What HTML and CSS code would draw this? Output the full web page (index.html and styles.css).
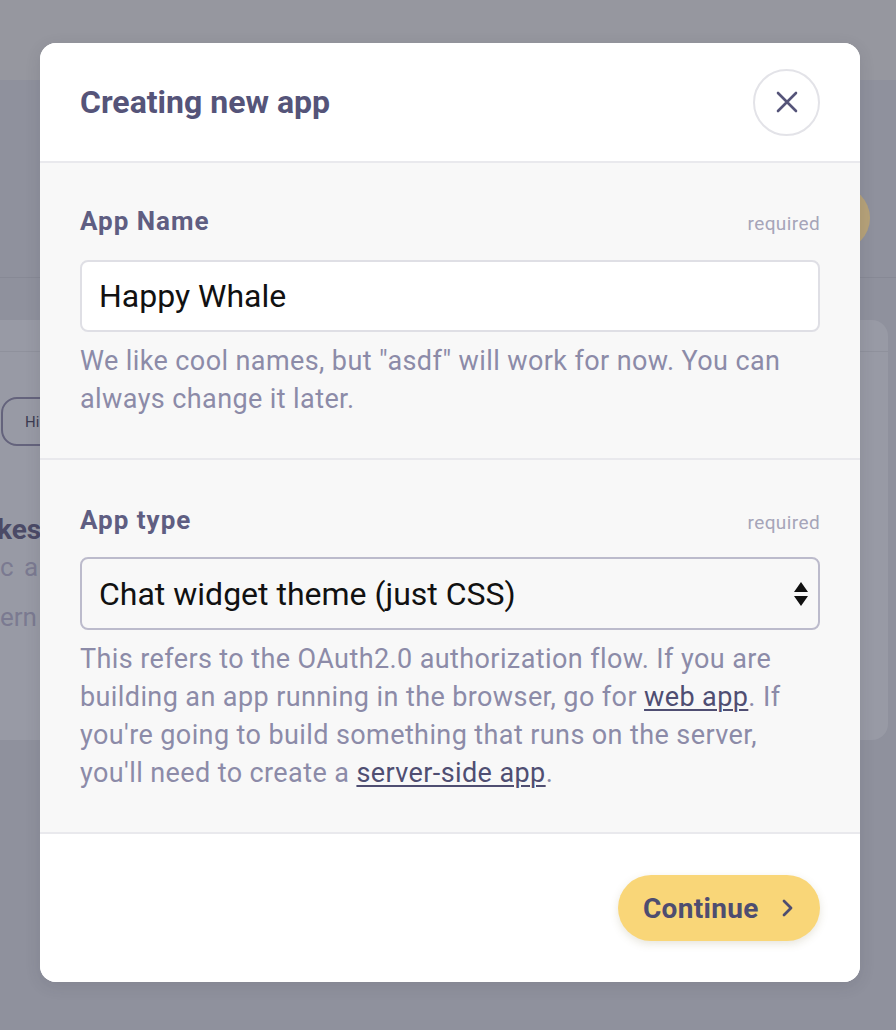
FILE: index.html
```html
<!DOCTYPE html>
<html lang="en">
<head>
<meta charset="utf-8">
<title>Creating new app</title>
<link rel="stylesheet" href="styles.css">
</head>
<body>
<div class="page">
  <div class="topbar"></div>
  <div class="hero">
    <span class="avatar"></span>
  </div>
  <div class="band"></div>
  <div class="card">
    <div class="card-head"></div>
    <div class="card-body">
      <div class="tab">Hi</div>
      <div class="bg-title">kes</div>
      <div class="bg-sub">c ap</div>
      <div class="bg-sub2">ern</div>
    </div>
  </div>

  <div class="modal">
    <div class="modal-head">
      <h1 class="modal-title">Creating new app</h1>
      <button class="close-btn" aria-label="Close">
        <svg width="22" height="22" viewBox="0 0 22 22"><path d="M2 2 L20 20 M20 2 L2 20" stroke="#555479" stroke-width="2.6" stroke-linecap="round"/></svg>
      </button>
    </div>
    <div class="section">
      <div class="label-row">
        <span class="label">App Name</span>
        <span class="req">required</span>
      </div>
      <div class="input">Happy Whale</div>
      <p class="help">We like cool names, but "asdf" will work for now. You can always change it later.</p>
    </div>
    <div class="section section-2">
      <div class="label-row">
        <span class="label">App type</span>
        <span class="req">required</span>
      </div>
      <div class="select">
        <span>Chat widget theme (just CSS)</span>
        <svg class="arrows" width="14" height="26" viewBox="0 0 14 26"><path d="M7 1 L14 11 L0 11 Z M0 15 L14 15 L7 25 Z" fill="#111"/></svg>
      </div>
      <p class="help">This refers to the OAuth2.0 authorization flow. If you are building an app running in the browser, go for <a class="link">web app</a>. If you're going to build something that runs on the server, you'll need to create a <a class="link">server-side app</a>.</p>
    </div>
    <div class="modal-foot">
      <button class="continue">Continue
        <svg width="12" height="18" viewBox="0 0 12 18"><path d="M3 2 L10 9 L3 16" fill="none" stroke="#4e4d70" stroke-width="2.8" stroke-linecap="round" stroke-linejoin="round"/></svg>
      </button>
    </div>
  </div>
</div>
</body>
</html>
```

FILE: styles.css
```css
* { box-sizing: border-box; }
html, body { margin: 0; padding: 0; }
body {
  font-family: Roboto, "Liberation Sans", sans-serif;
  background: #8f919d;
}
.page {
  position: relative;
  width: 896px;
  height: 1030px;
  overflow: hidden;
  background: #8f919d;
}
.topbar {
  height: 80px;
  background: #96979f;
}
.hero {
  height: 198px;
  display: flex;
  justify-content: flex-end;
  align-items: flex-start;
  padding: 106px 26px 0 0;
  border-bottom: 1px solid #878995;
}
.avatar {
  width: 64px;
  height: 64px;
  border-radius: 50%;
  background: #b6a279;
}
.band { height: 42px; }
.card {
  margin: 0 8px 0 -40px;
  height: 420px;
  background: #989aa5;
  border-radius: 16px;
}
.card-head {
  height: 32px;
  border-bottom: 1px solid #8f919c;
}
.card-body {
  padding: 45px 0 0 41px;
  display: flex;
  flex-direction: column;
  align-items: flex-start;
}
.tab {
  width: 80px;
  height: 49px;
  border: 2px solid #64637c;
  border-radius: 16px;
  display: flex;
  align-items: center;
  padding-left: 22px;
  font-size: 15px;
  color: #3c3b52;
}
.bg-title {
  margin: 67px 0 0 -4px;
  font-size: 28px;
  font-weight: 700;
  color: #4b4a66;
}
.bg-sub {
  margin: 6px 0 0 -1px;
  font-size: 26px;
  letter-spacing: 2px;
  color: #7b7a91;
}
.bg-sub2 {
  margin: 20px 0 0 -1px;
  font-size: 26px;
  color: #7b7a91;
}

/* modal */
.modal {
  position: absolute;
  left: 40px;
  top: 43px;
  width: 820px;
  height: 939px;
  background: #f8f8f8;
  border-radius: 16px;
  box-shadow: 0 4px 16px rgba(40, 40, 60, 0.12);
  display: flex;
  flex-direction: column;
  overflow: hidden;
}
.modal-head {
  height: 120px;
  background: #fff;
  border-bottom: 2px solid #e9e9ed;
  display: flex;
  align-items: center;
  justify-content: space-between;
  padding: 0 40px;
}
.modal-title {
  margin: 0;
  font-size: 32px;
  font-weight: 700;
  color: #555479;
}
.close-btn {
  width: 67px;
  height: 67px;
  border-radius: 50%;
  border: 2px solid #e3e3e8;
  background: #fff;
  display: flex;
  align-items: center;
  justify-content: center;
  padding: 0;
  margin-right: 0;
}
.section {
  padding: 42px 40px 40px;
  border-bottom: 2px solid #e9e9ed;
}
.label-row {
  display: flex;
  justify-content: space-between;
  align-items: center;
  height: 32px;
  margin-bottom: 23px;
}
.label {
  font-size: 26px;
  font-weight: 700;
  letter-spacing: 1px;
  color: #5f5e82;
}
.req {
  font-size: 19px;
  letter-spacing: 0.4px;
  color: #a6a5b9;
  padding-top: 4px;
}
.input {
  height: 72px;
  background: #fff;
  border: 2px solid #dfdfe5;
  border-radius: 8px;
  display: flex;
  align-items: center;
  padding-left: 17px;
  font-size: 32px;
  color: #111;
}
.select {
  height: 73px;
  background: #f8f8f8;
  border: 2px solid #bcbbcc;
  border-radius: 8px;
  display: flex;
  align-items: center;
  justify-content: space-between;
  padding: 0 10px 0 17px;
  font-size: 32px;
  color: #111;
}
.section-2 { padding-top: 44px; }
.section-2 .label-row { margin-bottom: 21px; }
.help {
  margin: 10px 0 0;
  font-size: 27px;
  letter-spacing: 0.4px;
  line-height: 38px;
  color: #8c8ba8;
}
.link {
  color: #4f4e72;
  text-decoration: underline;
  text-decoration-thickness: 2px;
  text-underline-offset: 3px;
}
.modal-foot {
  flex: 1;
  background: #fff;
  display: flex;
  align-items: center;
  justify-content: flex-end;
  padding: 0 40px;
}
.continue {
  height: 66px;
  width: 202px;
  border: none;
  border-radius: 33px;
  background: #f9d678;
  box-shadow: 0 3px 8px rgba(120, 110, 60, 0.18);
  display: flex;
  align-items: center;
  gap: 22px;
  padding: 0 0 0 25px;
  font-family: Roboto, "Liberation Sans", sans-serif;
  font-size: 28px;
  font-weight: 700;
  letter-spacing: 0.3px;
  color: #4e4d70;
}
```
